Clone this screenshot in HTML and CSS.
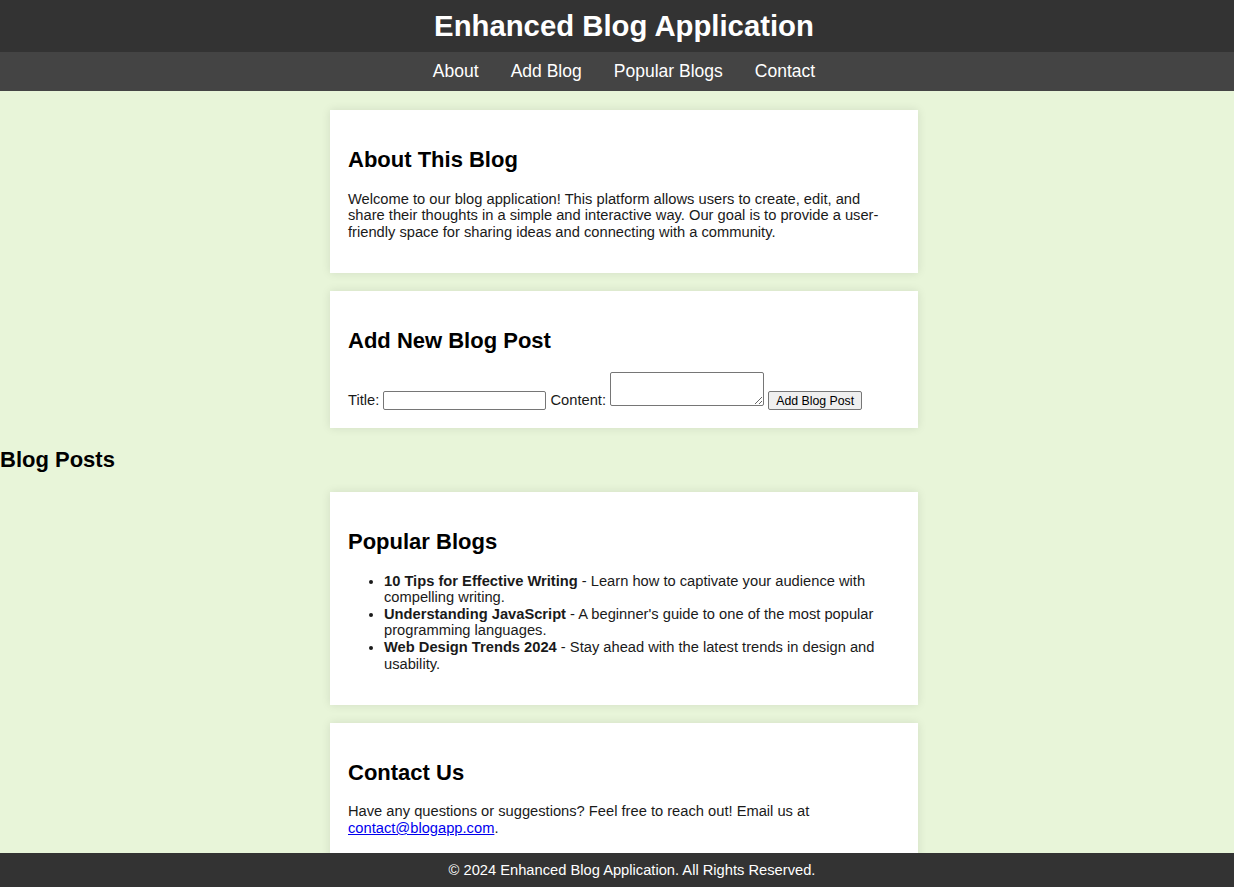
FILE: index.html
```html
<!DOCTYPE html>
<html lang="en">
<head>
<meta charset="UTF-8">
<title>Enhanced Blog Application</title>
<link rel="stylesheet" href="styles.css">
</head>
<body>
<header class="site-header">
  <h1 class="site-title">Enhanced Blog Application</h1>
</header>
<nav class="site-nav">
  <a href="#about">About</a>
  <a href="#add">Add Blog</a>
  <a href="#popular">Popular Blogs</a>
  <a href="#contact">Contact</a>
</nav>
<main class="main">
  <section class="card card-first" id="about">
    <h2 class="card-title">About This Blog</h2>
    <p class="text">Welcome to our blog application! This platform allows users to create, edit, and share their thoughts in a simple and interactive way. Our goal is to provide a user-friendly space for sharing ideas and connecting with a community.</p>
  </section>
  <section class="card" id="add">
    <h2 class="card-title">Add New Blog Post</h2>
    <form class="post-form">
      <label for="title">Title:</label> <input class="field" type="text" id="title"> <label for="content">Content:</label> <textarea class="area" id="content"></textarea> <button class="btn" type="button">Add Blog Post</button>
    </form>
  </section>
  <h2 class="posts-title">Blog Posts</h2>
  <div class="posts"></div>
  <section class="card" id="popular">
    <h2 class="card-title">Popular Blogs</h2>
    <ul class="list">
      <li><strong>10 Tips for Effective Writing</strong> - Learn how to captivate your audience with compelling writing.</li>
      <li><strong>Understanding JavaScript</strong> - A beginner's guide to one of the most popular programming languages.</li>
      <li><strong>Web Design Trends 2024</strong> - Stay ahead with the latest trends in design and usability.</li>
    </ul>
  </section>
  <section class="card" id="contact">
    <h2 class="card-title">Contact Us</h2>
    <p class="text">Have any questions or suggestions? Feel free to reach out! Email us at <a href="#" class="mail">contact@blogapp.com</a>.</p>
  </section>
</main>
<footer class="site-footer">© 2024 Enhanced Blog Application. All Rights Reserved.</footer>
</body>
</html>
```
FILE: styles.css
```css
html, body {
  margin: 0;
  padding: 0;
}
body {
  background: #e8f5d9;
  font-family: "Liberation Sans", Arial, sans-serif;
  font-size: 14.7px;
  line-height: 16.56px;
  color: #1a1a1a;
  padding-bottom: 40px;
}
.site-header {
  background: #333;
  color: #fff;
  text-align: center;
  padding: 9px 0 9px 14px;
}
.site-title {
  margin: 0;
  font-size: 29.3px;
  line-height: 34px;
  font-weight: bold;
}
.site-nav {
  background: #444;
  text-align: center;
  padding: 9px 0 9px 14px;
  line-height: 20px;
}
.site-nav a {
  color: #fff;
  text-decoration: none;
  font-size: 17.5px;
  margin: 0 14px;
}
.main {
  padding: 0;
}
.card {
  background: #fff;
  width: 588px;
  box-sizing: border-box;
  padding: 18px;
  margin: 18px calc(50% - 301px) 18px calc(50% - 287px);
  box-shadow: 0 0 9px rgba(0, 0, 0, 0.1);
}
.card-first {
  margin-top: 19px;
}
.card-title, .posts-title {
  font-size: 22px;
  line-height: 24.8px;
  font-weight: bold;
  margin: 20px 0 18px;
  color: #000;
}
.posts-title {
  margin: 20px 0 19px;
}
.text {
  margin: 14.4px 0;
}
.post-form {
  margin: 0;
}
.field {
  width: 163px;
  height: 19px;
  box-sizing: border-box;
  border: 1px solid #767676;
  border-radius: 2px;
  padding: 1px 2px;
  margin: 0;
  font-size: 12px;
  vertical-align: baseline;
}
.area {
  width: 154px;
  height: 34px;
  box-sizing: border-box;
  border: 1px solid #767676;
  border-radius: 2px;
  margin: 0;
  padding: 2px;
  font-size: 12px;
  vertical-align: -1px;
}
.btn {
  height: 19px;
  box-sizing: border-box;
  font-family: "Liberation Sans", Arial, sans-serif;
  font-size: 12.3px;
  padding: 1px 7px;
  border: 1px solid #767676;
  border-radius: 2px;
  background: #efefef;
  color: #000;
  margin: 0;
}
.list {
  margin: 14.4px 0;
  padding-left: 36px;
}
.mail {
  color: #0000ee;
}
.site-footer {
  position: fixed;
  left: 0;
  right: 0;
  bottom: 0;
  background: #333;
  color: #fff;
  text-align: center;
  padding: 8.7px 0 8.7px 30px;
  height: 34px;
  box-sizing: border-box;
}
```
